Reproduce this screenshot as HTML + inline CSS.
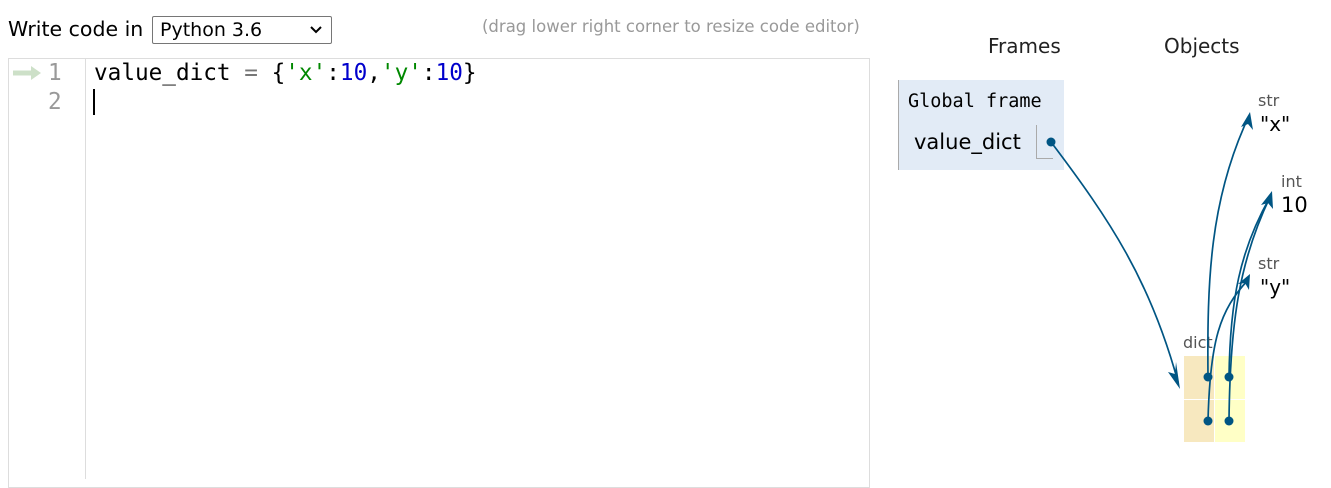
<!DOCTYPE html>
<html><head><style>
body{margin:0;width:1331px;height:477px;overflow:hidden;background:#fff;font-family:"DejaVu Sans","Liberation Sans",sans-serif;position:relative}
.a{position:absolute}
.mono{font-family:"DejaVu Sans Mono","Liberation Mono",monospace}
</style></head><body>
<div class="a" style="left:8px;top:17px;font-size:20.5px;color:#000">Write code in</div>
<div class="a" style="left:152px;top:16px;width:180px;height:28px;border:1px solid #767676;border-radius:2px;box-sizing:border-box;font-size:19px;padding:2px 0 0 7px">Python 3.6
<svg class="a" style="left:157px;top:9px" width="12" height="8"><path d="M1 1L6 6L11 1" stroke="#000" stroke-width="2" fill="none"/></svg></div>
<div class="a" style="left:482px;top:17px;font-size:16.5px;color:#999">(drag lower right corner to resize code editor)</div>
<div class="a" style="left:8px;top:58px;width:862px;height:430px;border:1px solid #ddd;box-sizing:border-box"></div>
<div class="a" style="left:85px;top:59px;width:1px;height:420px;background:#ddd"></div>
<svg class="a" style="left:12px;top:65px" width="30" height="16"><path d="M1 8H22" stroke="#cde0c8" stroke-width="5"/><path d="M19 1L29 8L19 15Z" fill="#cde0c8"/></svg>
<div class="a mono" style="left:48px;top:59px;font-size:22.7px;line-height:29px;color:#999">1<br>2</div>
<div class="a mono" style="left:94px;top:59px;font-size:22.7px;line-height:29px;white-space:pre;color:#000">value_dict <span style="color:#777">=</span> {<span style="color:#080">'x'</span>:<span style="color:#00c">10</span>,<span style="color:#080">'y'</span>:<span style="color:#00c">10</span>}</div>
<div class="a" style="left:93px;top:89px;width:2px;height:26px;background:#000"></div>
<div class="a" style="left:988px;top:34px;font-size:20px;color:#222">Frames</div>
<div class="a" style="left:1164px;top:34px;font-size:20px;color:#222">Objects</div>
<div class="a" style="left:898px;top:80px;width:166px;height:90px;background:#e2ebf6;border-left:1px solid #aaa;box-sizing:border-box"></div>
<div class="a mono" style="left:908px;top:91px;font-size:18.5px;color:#000">Global frame</div>
<div class="a" style="left:914px;top:130px;font-size:21px;color:#000">value_dict</div>
<div class="a" style="left:1036px;top:125px;width:16px;height:33px;border-left:1px solid #aaa;border-bottom:1px solid #aaa"></div>
<div class="a" style="left:1258px;top:91px;font-size:16px;color:#555">str</div>
<div class="a" style="left:1260px;top:112px;font-size:20px">"x"</div>
<div class="a" style="left:1281px;top:172px;font-size:16px;color:#555">int</div>
<div class="a" style="left:1281px;top:193px;font-size:21px">10</div>
<div class="a" style="left:1258px;top:254px;font-size:16px;color:#555">str</div>
<div class="a" style="left:1260px;top:275px;font-size:20px">"y"</div>
<div class="a" style="left:1183px;top:333px;font-size:16px;color:#555">dict</div>
<div class="a" style="left:1184px;top:356px;width:30px;height:43px;background:#f7e8bf"></div>
<div class="a" style="left:1215px;top:356px;width:30px;height:43px;background:#ffffc6"></div>
<div class="a" style="left:1184px;top:400px;width:30px;height:42px;background:#f7e8bf"></div>
<div class="a" style="left:1215px;top:400px;width:30px;height:42px;background:#ffffc6"></div>
<svg class="a" style="left:0;top:0" width="1331" height="477">
<g stroke="#005583" stroke-width="1.7" fill="none">
<path d="M1051 142C1110 220 1150 280 1178 382"/>
<path d="M1208 377C1207 280 1210 200 1248 118"/>
<path d="M1208 421C1210 340 1220 310 1248 280"/>
<path d="M1229 377C1230 300 1240 250 1270 197"/>
<path d="M1229 421C1230 320 1240 260 1270 197"/>
</g>
<g fill="#005583">
<circle cx="1051" cy="142" r="4.5"/><circle cx="1208" cy="377" r="4.5"/><circle cx="1229" cy="377" r="4.5"/><circle cx="1208" cy="421" r="4.5"/><circle cx="1229" cy="421" r="4.5"/>
<path d="M1180 389L1168 372L1175 374L1176 362Z"/>
<path d="M1250 112L1253 130L1248 124L1241 127Z"/>
<path d="M1272 191L1273 209L1268 203L1261 205Z"/>
<path d="M1250 274L1249 290L1245 283L1238 284Z"/>
</g>
</svg>
</body></html>
